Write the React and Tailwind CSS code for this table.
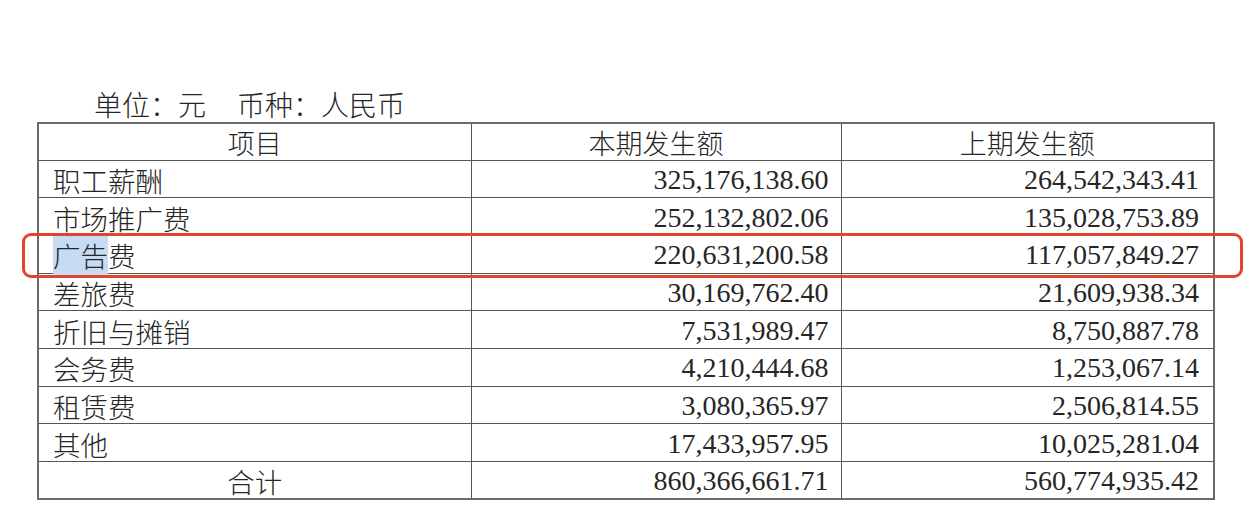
const rows = [
  ['职工薪酬', '325,176,138.60', '264,542,343.41'],
  ['市场推广费', '252,132,802.06', '135,028,753.89'],
  ['广告费', '220,631,200.58', '117,057,849.27'],
  ['差旅费', '30,169,762.40', '21,609,938.34'],
  ['折旧与摊销', '7,531,989.47', '8,750,887.78'],
  ['会务费', '4,210,444.68', '1,253,067.14'],
  ['租赁费', '3,080,365.97', '2,506,814.55'],
  ['其他', '17,433,957.95', '10,025,281.04'],
]

const cjk = { fontFamily: '"Noto Sans CJK SC", sans-serif' }
const num = { fontFamily: '"Liberation Serif", "Noto Sans CJK SC", serif' }

function Label({ text }) {
  if (text === '广告费') {
    return (
      <span>
        <span className="bg-[#c6dcf5]">广告</span>费
      </span>
    )
  }
  return <span>{text}</span>
}

export default function App() {
  return (
    <div className="w-[1250px] h-[520px] bg-white text-[#262626] overflow-hidden">
      <div className="pt-[86px] pl-[37px]">
        <div className="pl-[57px] h-[36px] text-[28px] leading-[36px] font-light" style={cjk}>
          单位：元&nbsp;&nbsp;&nbsp;&nbsp;&nbsp;币种：人民币
        </div>
        <div className="relative w-[1176px]">
          <table className="border-collapse border-2 border-[#6b6b6b] table-fixed w-[1176px]">
            <colgroup>
              <col className="w-[433px]" />
              <col className="w-[370px]" />
              <col className="w-[373px]" />
            </colgroup>
            <thead>
              <tr className="h-[37px] text-[27px] leading-[30px] font-light" style={cjk}>
                <th className="border border-[#555] font-light text-center p-0 pt-[2px]">项目</th>
                <th className="border border-[#555] font-light text-center p-0 pt-[2px]">本期发生额</th>
                <th className="border border-[#555] font-light text-center p-0 pt-[2px]">上期发生额</th>
              </tr>
            </thead>
            <tbody>
              {rows.map((r) => (
                <tr key={r[0]} className="h-[37.7px]">
                  <td className="border border-[#555] pl-[14px] p-0 pt-[2px] text-[27.5px] font-light leading-[30px]" style={cjk}>
                    <Label text={r[0]} />
                  </td>
                  <td className="border border-[#555] pr-[12px] p-0 pt-[2px] text-right text-[28px] leading-[30px]" style={num}>
                    {r[1]}
                  </td>
                  <td className="border border-[#555] pr-[14px] p-0 pt-[2px] text-right text-[28px] leading-[30px]" style={num}>
                    {r[2]}
                  </td>
                </tr>
              ))}
              <tr className="h-[37.7px]">
                <td className="border border-[#555] p-0 pt-[2px] text-center text-[27.5px] leading-[30px] font-light" style={cjk}>
                  合计
                </td>
                <td className="border border-[#555] pr-[12px] p-0 pt-[2px] text-right text-[28px] leading-[30px]" style={num}>
                  860,366,661.71
                </td>
                <td className="border border-[#555] pr-[14px] p-0 pt-[2px] text-right text-[28px] leading-[30px]" style={num}>
                  560,774,935.42
                </td>
              </tr>
            </tbody>
          </table>
          <div className="absolute left-[-15px] top-[111px] w-[1221px] h-[45px] border-[3px] border-[#e2452f] rounded-[9px] pointer-events-none" />
        </div>
      </div>
    </div>
  )
}
